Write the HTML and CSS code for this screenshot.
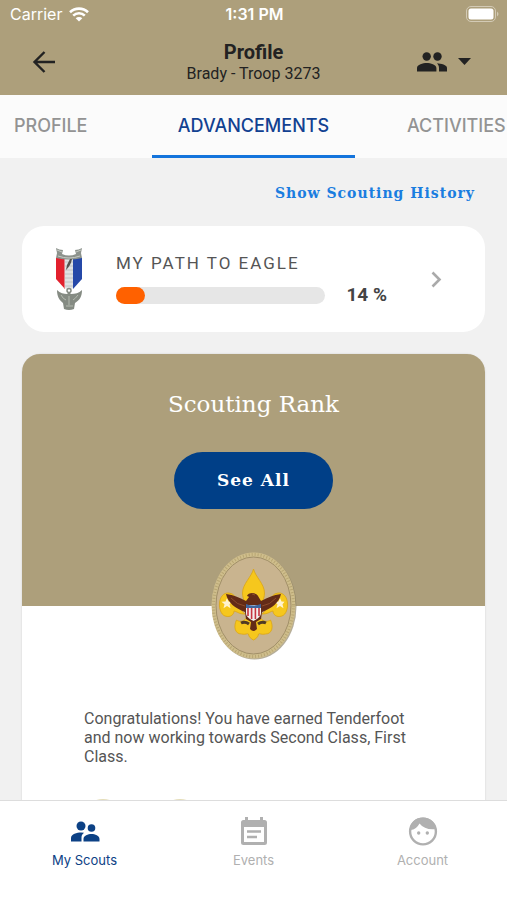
FILE: index.html
```html
<!DOCTYPE html>
<html lang="en">
<head>
<meta charset="utf-8">
<meta name="viewport" content="width=device-width, initial-scale=1">
<title>Profile</title>
<link rel="stylesheet" href="styles.css">
</head>
<body>
<header class="top">
  <div class="status">
    <div class="carrier">Carrier
      <svg width="20" height="15" viewBox="0 0 20 15" fill="none" stroke="#fff" stroke-width="2.6"><path d="M1 5.2a13 13 0 0 1 18 0M4.2 8.6a8.4 8.4 0 0 1 11.6 0"/><path d="M10 14.6 6.7 11.300a4.700 4.700 0 0 1 6.600 0z" fill="#fff" stroke="none"/></svg>
    </div>
    <div class="clock">1:31 PM</div>
    <svg class="battery" width="33" height="16" viewBox="0 0 33 16"><rect x=".5" y=".5" width="29" height="15" rx="4.500" fill="none" stroke="#d3cab5"/><rect x="2.500" y="2.500" width="25" height="11" rx="2.500" fill="#fff"/><path d="M31 5.500q3 2.500 0 5z" fill="#d3cab5"/></svg>
  </div>
  <div class="bar">
    <button class="icon-button back" aria-label="Back"><svg width="24" height="24" viewBox="0 0 24 24" fill="none" stroke="#222" stroke-width="2.400"><path d="M23 12H3M12.500 2 2.500 12l10 10"/></svg></button>
    <div class="heading">
      <h1>Profile</h1>
      <p>Brady - Troop 3273</p>
    </div>
    <button class="icon-button switch" aria-label="Switch scout">
      <svg width="30" height="20" viewBox="0 0 30 20" fill="#222"><circle cx="9.700" cy="4.500" r="4.200"/><circle cx="20.500" cy="4.500" r="4.200"/><path d="M0 19.500V16c0-3.500 6-5 9.700-5s9.700 1.500 9.700 5v3.500zM20 11.300c4 .3 10 1.600 10 4.700v3.500h-8V16c0-2-1-3.600-2-4.700z"/></svg>
      <svg width="13" height="7" viewBox="0 0 13 7"><path d="M0 0h13L6.500 7z" fill="#222"/></svg>
    </button>
  </div>
</header>
<nav class="tabs" aria-label="Sections">
  <a href="#profile">PROFILE</a>
  <a href="#advancements" class="active" aria-current="page">ADVANCEMENTS</a>
  <a href="#activities">ACTIVITIES</a>
</nav>
<main>
  <a class="history" href="#history">Show Scouting History</a>
  <a class="path-card" href="#eagle">
    <svg class="medal" width="28" height="64" viewBox="0 0 28 64">
      <path d="M1 11h9v31L1 32z" fill="#e2202d"/><path d="M9.500 11h9v30L14 43l-4.500-2z" fill="#dfe1e3"/><path d="M18 11h9v21l-9 10z" fill="#2548a8"/>
      <path d="M10 15h8M10 19h8M10 23h8M10 27h8M10 31h8M10 35h8M10 39h8" stroke="#bfc2c4"/>
      <path d="M1 1q3 2 7 2L7 7q7 3 14 0l-1-4q4 0 7-2l-1 5 1 5q-13 3-26 0l1-5z" fill="#8c928c"/><path d="M2 3l5 2M26 3l-5 2M3 9q11 4 22 0" stroke="#c5cac3" fill="none"/>
      <path d="M17 12c-1 5-3 8-6 11l1-5 3-6z" fill="#55534f"/>
      <circle cx="14" cy="43.500" r="2" fill="none" stroke="#858b83" stroke-width="1.500"/>
      <path d="M2 43c3 3 7 4 10 4l2-2 2 2c4 0 8-1 11-4 0 6-2 10-7 13l-1 6q-5 2-10 0l-1-6c-4-3-6-7-6-13z" fill="#858b83"/>
      <path d="M6 48q2 4 5 5M23 48q-3 4-5 5M11 59h7M14 49v9" stroke="#b4bab0" fill="none"/>
    </svg>
    <div class="path-info">
      <h2>MY PATH TO EAGLE</h2>
      <div class="path-row"><div class="track" role="progressbar" aria-label="My path to Eagle" aria-valuenow="14" aria-valuemin="0" aria-valuemax="100"><div class="fill" style="width:14%"></div></div><strong>14 %</strong></div>
    </div>
    <svg class="chevron" width="11" height="17" viewBox="0 0 11 17" fill="none" stroke="#aaa" stroke-width="2.600"><path d="m1.500 1.500 7 7-7 7"/></svg>
  </a>
  <section class="rank-card">
    <div class="rank-head">
      <h2>Scouting Rank</h2>
      <button class="see-all">See All</button>
    </div>
    <svg class="patch" width="86" height="108" viewBox="0 0 86 108" role="img" aria-label="Tenderfoot">
      <ellipse cx="43.500" cy="54.500" rx="42" ry="53" fill="#8d8162" opacity=".65"/>
      <ellipse cx="42.500" cy="53.500" rx="42" ry="53" fill="#cfbe8c"/>
      <ellipse cx="42.500" cy="53.500" rx="40" ry="51" fill="none" stroke="#b8a673" stroke-width="3" stroke-dasharray="1 2"/>
      <ellipse cx="42.500" cy="53.500" rx="37.500" ry="48.500" fill="#c9b48f" stroke="#a18f68"/>
      <g fill="#f6c71d" stroke="#dba514" stroke-width=".8">
        <path d="M42.500 17c2 8 11 15 11 24 0 7-4 12-6 17h-10c-2-5-6-10-6-17 0-9 9-16 11-24z"/>
        <path d="M34 62C27 58 28 42 18 41 6 40 6 61 14 64c6 2 9-2 9-5 4 1 5 3 11 3zM51 62c7-4 6-20 16-21 12-1 12 20 4 23-6 2-9-2-9-5-4 1-5 3-11 3z"/>
        <path d="M35.500 66h14c3 4 7 4 10 2 3 6 2 14-5 14-4 1-6-1-7 0 0 3-3 5-5 6-2-1-5-3-5-6-1-1-3 1-7 0-7 0-8-8-5-14 3 2 7 2 10-2z"/>
      </g>
      <path d="m16 46 1.500 3.500 3 .3-2 2.500 1 4-3.500-2.300-3.500 2.300 1-4-3-2.500 4-.3zM69 46l1.500 3.500 3 .3-2 2.500 1 4-3.500-2.300-3.500 2.300 1-4-3-2.500 4-.3z" fill="#fff3d0"/>
      <path d="M15 42c8 1 14 4 20 7l3-4c-1-1-2-1-2-1 1-4 9-4 11 0l3 5c6-3 12-6 20-7-2 9-9 14-19 18l-1 7-5 3 1 7q-3.500 4-7 0l1-7-5-3-1-7c-10-4-17-9-19-18z" fill="#632b17"/>
      <path d="M20 46q6 7 14 8M65 46q-6 7-14 8M41 42l3 1" stroke="#8c4b2b" fill="none"/>
      <path d="M35 53h15v8c0 4-4 6-7.500 8-3.500-2-7.500-4-7.500-8z" fill="#f4eeed"/><path d="M37 56v8M40.600 56v11M44.400 56v11M48 56v8" stroke="#c53440" stroke-width="1.600"/><path d="M35 52q7.500 3 15 0v4H35z" fill="#3e659f"/>
      <path d="M30 71q4-2 8 1M47 72q4-3 8-1" stroke="#4f3a24" stroke-width="3" fill="none"/>
    </svg>
    <p>Congratulations! You have earned Tenderfoot and now working towards Second Class, First Class.</p>
    <div class="next">
      <svg width="56" height="70" viewBox="0 0 56 70"><ellipse cx="28" cy="35" rx="28" ry="35" fill="#e4ddb9"/></svg>
      <svg width="56" height="70" viewBox="0 0 56 70"><ellipse cx="28" cy="35" rx="28" ry="35" fill="#e4ddb9"/></svg>
    </div>
  </section>
</main>
<nav class="bottom" aria-label="Main">
  <a href="#scouts" class="active">
    <svg width="30" height="30" viewBox="0 0 30 30" fill="currentColor"><circle cx="11" cy="9" r="4.500"/><circle cx="21.500" cy="11" r="3.800"/><path d="M1 24.500V21c0-4 6-5.500 10-5.500l3 .3c-2 1.500-2.500 3-2.500 5v3.700zM13.500 24.500V22c0-3.500 4.500-5 8-5s8 1.500 8 5v2.500z"/></svg>
    My Scouts</a>
  <a href="#events">
    <svg width="30" height="30" viewBox="0 0 30 30"><path fill="currentColor" fill-rule="evenodd" d="M6 0h3v3h12V0h3v3h1.500A2.500 2.500 0 0 1 28 5.500v20a2.500 2.500 0 0 1-2.500 2.500h-21A2.500 2.500 0 0 1 2 25.500v-20A2.500 2.500 0 0 1 4.500 3H6zM5 10v15h20V10z"/><path d="M8 14.500h14M8 20h10" stroke="currentColor" stroke-width="2.500"/></svg>
    Events</a>
  <a href="#account">
    <svg width="30" height="30" viewBox="0 0 30 30"><circle cx="15" cy="14.500" r="12.900" fill="none" stroke="currentColor" stroke-width="2.400"/><path d="M2 13C2 5 8 .5 15 .5S28 6 28 12c-7 1-13-1-16.500-5.500C9.500 10 7 13 2 13z" fill="currentColor"/><circle cx="10.700" cy="16" r="1.700" fill="currentColor"/><circle cx="19.300" cy="16" r="1.700" fill="currentColor"/></svg>
    Account</a>
</nav>
</body>
</html>
```
FILE: styles.css
```css
* { box-sizing: border-box; }
body {
  margin: 0;
  height: 100vh;
  display: flex;
  flex-direction: column;
  background: #f1f1f1;
  color: #555;
  font-family: Roboto, "Liberation Sans", sans-serif;
}
h1, h2, p { margin: 0; }
a { color: inherit; text-decoration: none; }
svg { display: block; flex: none; }
button { border: 0; padding: 0; background: none; font: inherit; }

.top { flex: none; background: #ad9f7b; color: #222; padding-bottom: 10px; }
.status, .bar { display: grid; grid-template-columns: 1fr auto 1fr; align-items: center; }
.status {
  height: 30px;
  padding: 0 8px 2px 10px;
  color: #fff;
  font: 16px/20px Inter, sans-serif;
}
.carrier { display: flex; align-items: center; gap: 7px; }
.clock { font-weight: 600; }
.battery { justify-self: end; }
.bar { height: 55px; padding: 8px 36px 0 32px; }
.heading { text-align: center; padding-left: 4px; }
.heading h1 { font-size: 20px; line-height: 24px; font-weight: 700; }
.heading p { font-size: 16px; line-height: 20px; }
.back { justify-self: start; }
.switch { justify-self: end; display: flex; align-items: center; gap: 11px; }

.tabs {
  flex: none;
  display: flex;
  justify-content: center;
  overflow: hidden;
  background: #fbfbfb;
  font: 500 18px/58px Inter, sans-serif;
  color: #939393;
}
.tabs a { flex: none; width: 40%; padding-top: 2px; text-align: center; border-bottom: 3px solid transparent; }
.tabs .active { color: #124191; border-color: #1474dc; }

main { flex: 1; min-height: 0; overflow: hidden; padding: 0 22px; }
.history {
  display: block;
  margin: 24px 10px 22px;
  text-align: right;
  color: #1a7de0;
  font: 700 14px/22px "Roboto Slab", "DejaVu Serif", serif;
  letter-spacing: 1px;
}
.path-card {
  display: flex;
  align-items: center;
  height: 106px;
  padding: 0 43px 0 33px;
  border-radius: 22px;
  background: #fff;
}
.path-info { flex: 1; margin: 0 44px 0 33px; }
.path-info h2 { font-size: 17px; line-height: 24px; font-weight: 400; letter-spacing: 2px; white-space: nowrap; }
.path-row { display: flex; align-items: center; gap: 21px; margin-top: 8px; }
.track { flex: 1; height: 17px; border-radius: 9px; background: #e6e6e6; }
.fill { height: 17px; border-radius: 9px; background: #ff6100; }
.path-row strong { font-size: 19px; line-height: 24px; white-space: nowrap; color: #444; }

.rank-card {
  margin-top: 22px;
  border-radius: 20px 20px 0 0;
  background: #fff;
  box-shadow: 0 0 2px #ccc;
}
.rank-head {
  height: 252px;
  padding-top: 33px;
  border-radius: 18px 18px 0 0;
  background: #ad9f7b;
  color: #fff;
  text-align: center;
}
.rank-head h2 { font: 400 23px/34px "Roboto Slab", "DejaVu Serif", serif; }
.see-all {
  margin-top: 31px;
  padding: 0 43px;
  border-radius: 29px;
  background: #003f87;
  color: #fff;
  font: 700 17px/57px "Roboto Slab", "DejaVu Serif", serif;
  letter-spacing: 1px;
}
.patch { position: relative; margin: -54px auto 0; }
.rank-card p { padding: 49px 62px 0; font-size: 16px; line-height: 19px; }
.next { display: flex; gap: 21px; padding: 33px 53px 0; }

.bottom {
  flex: none;
  display: grid;
  grid-template-columns: repeat(3, 1fr);
  height: 100px;
  padding-top: 16px;
  border-top: 1px solid #ddd;
  background: #fff;
  color: #b0b0b0;
  font: 13px/18px Inter, sans-serif;
}
.bottom a { display: flex; flex-direction: column; align-items: center; gap: 4px; }
.bottom .active { color: #0c4185; }
```
